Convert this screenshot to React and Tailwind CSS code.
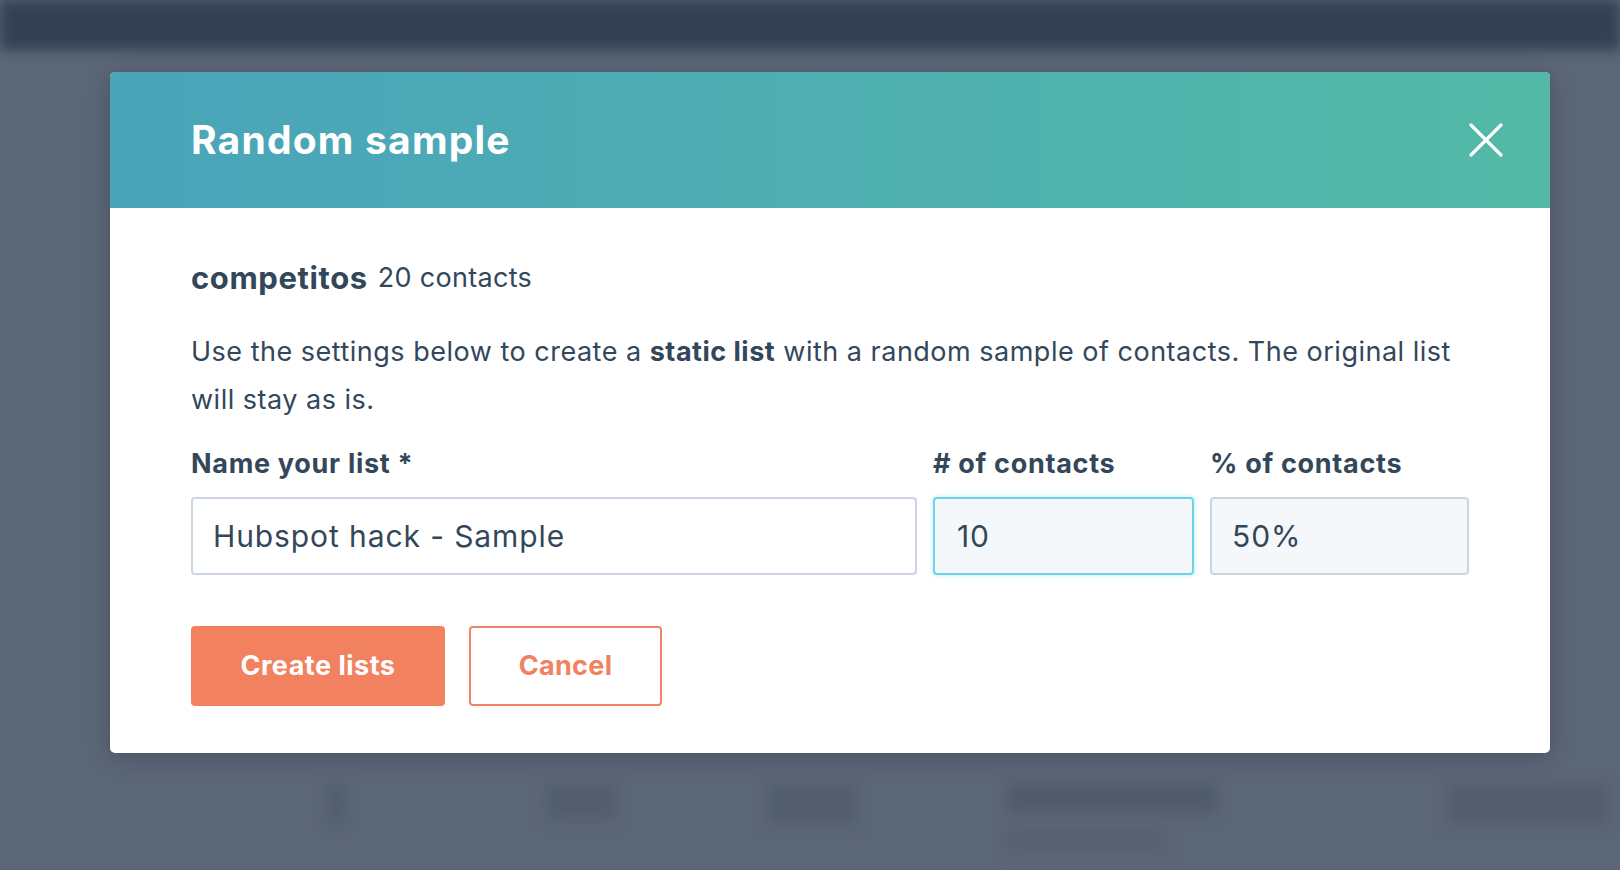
import React from 'react';

const ink = 'text-[#33475b]';

function CloseIcon() {
  return (
    <svg width="34" height="34" viewBox="0 0 34 34" fill="none">
      <path d="M2 2 L32 32 M32 2 L2 32" stroke="white" strokeWidth="3.2" strokeLinecap="round" />
    </svg>
  );
}

function Field({ label, value, width, className }) {
  return (
    <div className="flex flex-col" style={{ width }}>
      <label className={`h-[36px] text-[27px] leading-[36px] font-bold tracking-[0.7px] ${ink}`}>{label}</label>
      <div className={`mt-[15px] h-[78px] flex items-center rounded-[4px] border-2 pl-5 text-[30px] tracking-[0.9px] ${ink} ${className}`}>
        {value}
      </div>
    </div>
  );
}

export default function App() {
  return (
    <div className="min-h-[870px] bg-[#5b6677] overflow-hidden" style={{ fontFamily: 'Inter, "Noto Sans", sans-serif' }}>
      {/* blurred page behind the overlay */}
      <div className="h-[50px] bg-[#344154] blur-[6px]" />
      <div className="h-[22px]" />

      {/* Modal */}
      <div className="ml-[110px] w-[1440px] rounded-[5px] bg-white overflow-hidden shadow-[0_4px_24px_rgba(0,0,0,0.2)]">
        <div className="h-[136px] flex items-center justify-between pl-[81px] pr-[47px] bg-gradient-to-r from-[#4aa4ba] to-[#53b9a6]">
          <h1 className="text-[39px] font-bold text-white tracking-[1.2px]">Random sample</h1>
          <CloseIcon />
        </div>

        <div className="pl-[81px] pr-[81px] pt-[50px] pb-[47px]">
          <div className={`h-[40px] flex items-center gap-[10px] ${ink}`}>
            <span className="text-[31px] font-bold tracking-[0.6px]">competitos</span>
            <span className="text-[27px] tracking-[0.3px]">20 contacts</span>
          </div>

          <p className={`mt-[30px] text-[27px] leading-[48px] tracking-[0.5px] ${ink}`}>
            Use the settings below to create a <b className="font-bold">static list</b> with a random sample of contacts. The original list
            <br />
            will stay as is.
          </p>

          <div className="mt-[22px] flex gap-4">
            <Field label="Name your list *" value="Hubspot hack - Sample" width={726} className="border-[#cbd6e2] bg-white" />
            <Field label="# of contacts" value="10" width={261} className="border-[#6fd2e6] bg-[#f5f8fa] pl-[22px] shadow-[0_0_4px_rgba(0,208,228,0.35)]" />
            <Field label="% of contacts" value="50%" width={259} className="border-[#cbd6e2] bg-[#f5f8fa]" />
          </div>

          <div className="mt-[51px] flex gap-[24px]">
            <button className="h-[80px] w-[254px] rounded-[4px] bg-[#f2825f] text-[27px] font-bold tracking-[0.5px] text-white">
              Create lists
            </button>
            <button className="h-[80px] w-[193px] rounded-[4px] border-2 border-[#f2826a] bg-white text-[27px] font-bold tracking-[0.3px] text-[#f2825f]">
              Cancel
            </button>
          </div>
        </div>
      </div>

      {/* blurred table remnants below */}
      <div className="mt-[30px] flex items-start gap-0 blur-[7px]">
        <div className="ml-[330px] w-[12px] h-[40px] bg-[#4f5b6d]" />
        <div className="ml-[205px] w-[70px] h-[36px] bg-[#525d6f]" />
        <div className="ml-[150px] w-[90px] h-[40px] bg-[#525d6f]" />
        <div className="ml-[150px] flex flex-col gap-4">
          <div className="w-[210px] h-[30px] bg-[#4f5a6c]" />
          <div className="w-[160px] h-[24px] bg-[#56616f]" />
        </div>
        <div className="ml-[230px] w-[160px] h-[40px] bg-[#525d6f]" />
      </div>
    </div>
  );
}
